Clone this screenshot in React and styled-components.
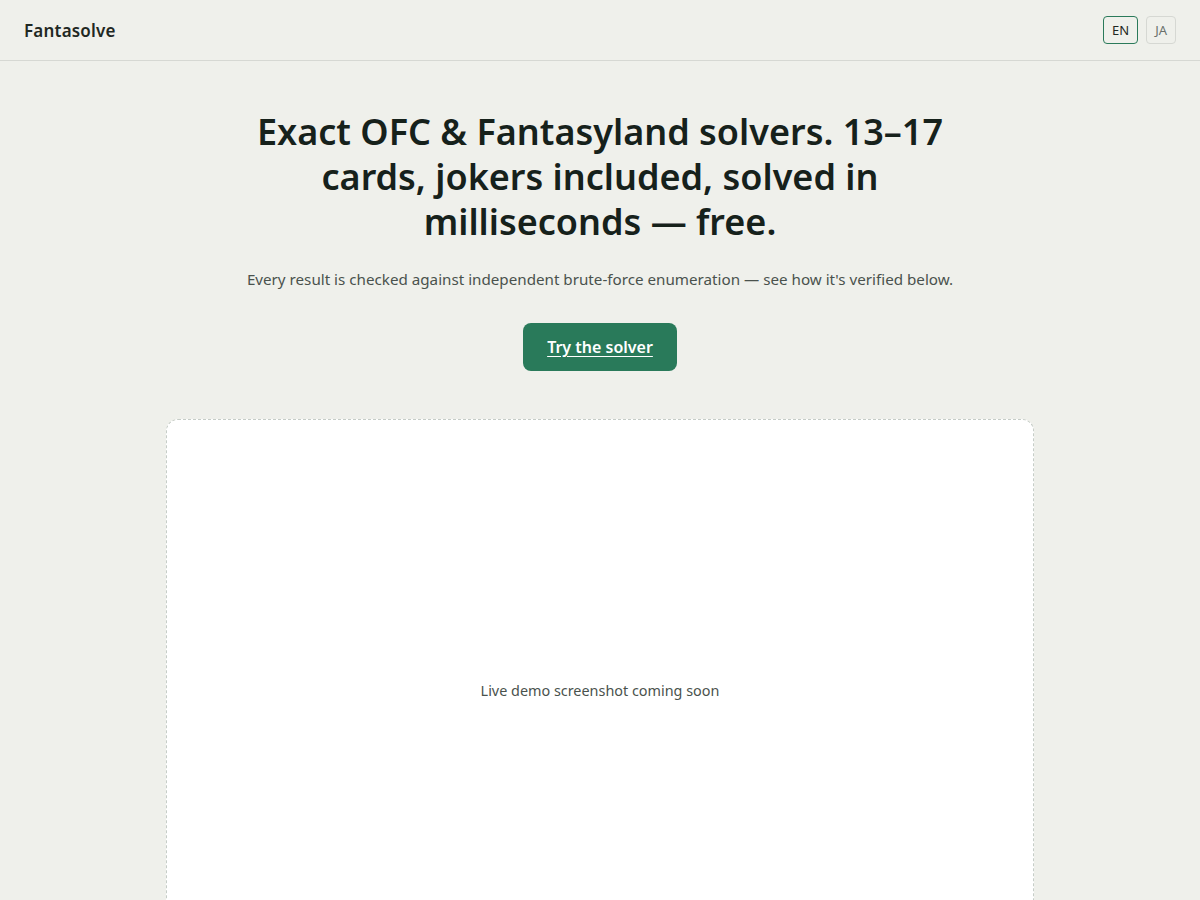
import styled, { createGlobalStyle } from "styled-components";

const GlobalStyle = createGlobalStyle`
  body {
    margin: 0;
    background: #eff0eb;
    font-family: "Noto Sans", "Open Sans", sans-serif;
    color: #1a241f;
  }
`;

const Header = styled.header`
  display: flex;
  align-items: center;
  justify-content: space-between;
  height: 60px;
  padding: 0 24px;
  border-bottom: 1px solid #d6d8d3;
`;

const Brand = styled.div`
  font-size: 17px;
  font-weight: 600;
  letter-spacing: 0.2px;
  color: #1f2823;
`;

const LangGroup = styled.div`
  display: flex;
  gap: 8px;
`;

const LangButton = styled.button`
  font-family: inherit;
  font-size: 13px;
  height: 28px;
  padding: 0 8px;
  border-radius: 4px;
  background: transparent;
  cursor: pointer;
  color: ${(p) => (p.$active ? "#1f2823" : "#6b706c")};
  border: 1px solid ${(p) => (p.$active ? "#2a7a5a" : "#d6d8d3")};
`;

const Main = styled.main`
  display: flex;
  flex-direction: column;
  align-items: center;
  padding: 48px 24px 0;
`;

const Title = styled.h1`
  margin: 0;
  max-width: 720px;
  text-align: center;
  font-size: 36px;
  line-height: 45px;
  font-weight: 600;
  color: #16211b;
`;

const Lead = styled.p`
  margin: 25px 0 0;
  font-size: 15.2px;
  color: #4a524d;
  text-align: center;
`;

const Cta = styled.a`
  margin-top: 34px;
  display: inline-flex;
  align-items: center;
  justify-content: center;
  height: 48px;
  padding: 0 24px;
  border-radius: 8px;
  background: #297a5a;
  color: #fff;
  font-size: 16px;
  font-weight: 600;
  text-decoration: underline;
  text-underline-offset: 3px;
`;

const DemoCard = styled.div`
  margin-top: 48px;
  width: 868px;
  box-sizing: border-box;
  aspect-ratio: 16 / 10;
  background: #fff;
  border: 1px dashed #c6cdc7;
  border-radius: 12px;
  display: flex;
  align-items: center;
  justify-content: center;
  font-size: 14.4px;
  color: #4a524d;
`;

export default function App() {
  return (
    <>
      <GlobalStyle />
      <Header>
        <Brand>Fantasolve</Brand>
        <LangGroup>
          <LangButton $active>EN</LangButton>
          <LangButton>JA</LangButton>
        </LangGroup>
      </Header>
      <Main>
        <Title>
          Exact OFC &amp; Fantasyland solvers. 13–17 cards, jokers included,
          solved in milliseconds — free.
        </Title>
        <Lead>
          Every result is checked against independent brute-force enumeration —
          see how it's verified below.
        </Lead>
        <Cta href="#solver">Try the solver</Cta>
        <DemoCard>Live demo screenshot coming soon</DemoCard>
      </Main>
    </>
  );
}
